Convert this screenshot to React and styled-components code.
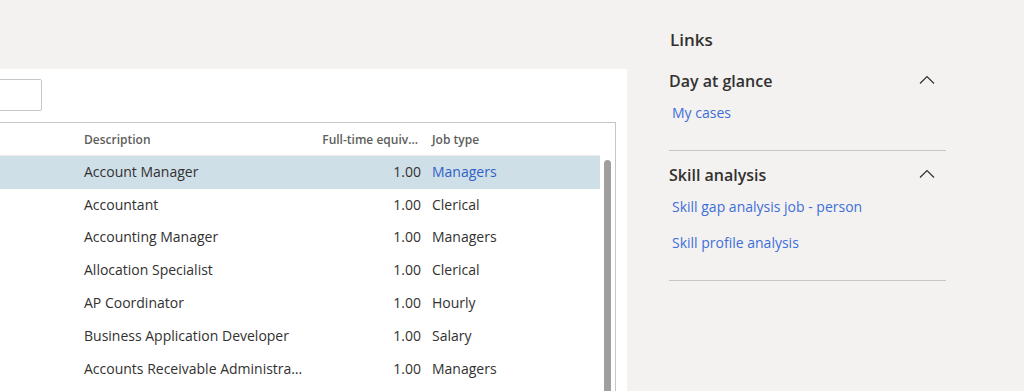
import React from "react";
import styled, { createGlobalStyle } from "styled-components";

const GlobalStyle = createGlobalStyle`
  html, body {
    margin: 0;
    padding: 0;
    background: #f3f2f1;
    font-family: "Open Sans", "Noto Sans", sans-serif;
    color: #323130;
  }
`;

const jobs = [
  { desc: "Account Manager", fte: "1.00", type: "Managers", selected: true },
  { desc: "Accountant", fte: "1.00", type: "Clerical" },
  { desc: "Accounting Manager", fte: "1.00", type: "Managers" },
  { desc: "Allocation Specialist", fte: "1.00", type: "Clerical" },
  { desc: "AP Coordinator", fte: "1.00", type: "Hourly" },
  { desc: "Business Application Developer", fte: "1.00", type: "Salary" },
  { desc: "Accounts Receivable Administrator", fte: "1.00", type: "Managers" },
];

const sections = [
  { title: "Day at glance", links: ["My cases"] },
  {
    title: "Skill analysis",
    links: ["Skill gap analysis job - person", "Skill profile analysis"],
  },
];

const Chevron = () => (
  <svg width="16" height="10" viewBox="0 0 16 10" fill="none">
    <path d="M1 8.5 L8 1.5 L15 8.5" stroke="#323130" strokeWidth="1.2" />
  </svg>
);

const App = () => {
  return (
    <Page>
      <GlobalStyle />
      <Workspace>
        <Panel>
          <Inner>
            <SearchBox />
            <Grid>
              <HeaderRow>
                <span />
                <HeadCell>Description</HeadCell>
                <HeadCell align="right">Full-time equiv...</HeadCell>
                <HeadCell>Job type</HeadCell>
              </HeaderRow>
              <Body>
                <Rows>
                  {jobs.map((j) => (
                    <Row key={j.desc} selected={j.selected}>
                      <span />
                      <Cell>{j.desc}</Cell>
                      <Cell align="right">{j.fte}</Cell>
                      <Cell link={j.selected}>{j.type}</Cell>
                    </Row>
                  ))}
                </Rows>
                <Track>
                  <Thumb />
                </Track>
              </Body>
            </Grid>
          </Inner>
        </Panel>
      </Workspace>
      <Pane>
        <PaneTitle>Links</PaneTitle>
        {sections.map((s) => (
          <Section key={s.title}>
            <SectionHeader>
              <span>{s.title}</span>
              <Chevron />
            </SectionHeader>
            <LinkList>
              {s.links.map((l) => (
                <LinkItem key={l} href="#">
                  {l}
                </LinkItem>
              ))}
            </LinkList>
          </Section>
        ))}
      </Pane>
    </Page>
  );
};

const Page = styled.div`
  display: flex;
  width: 1024px;
  height: 391px;
  overflow: hidden;
`;

const Workspace = styled.div`
  width: 627px;
  padding-top: 69px;
  display: flex;
  flex-direction: column;
`;

const Panel = styled.div`
  flex: 1;
  background: #ffffff;
  overflow: hidden;
`;

const Inner = styled.div`
  margin-left: -200px;
  padding-top: 10px;
`;

const SearchBox = styled.div`
  width: 240px;
  height: 30px;
  border: 1px solid #c8c6c4;
  border-radius: 2px;
`;

const Grid = styled.div`
  margin-top: 11px;
  width: 814px;
  border: 1px solid #c8c6c4;
  border-bottom: none;
`;

const columns = "276px 236px 112px 1fr";

const HeaderRow = styled.div`
  display: grid;
  grid-template-columns: ${columns};
  height: 32px;
  align-items: center;
  border-bottom: 1px solid #edebe9;
  margin-right: 15px;
`;

const HeadCell = styled.div`
  font-size: 12px;
  font-weight: 600;
  color: #605e5c;
  padding: ${(p) => (p.align === "right" ? "0 7px 0 0" : "0 8px 0 7px")};
  text-align: ${(p) => p.align || "left"};
  white-space: nowrap;
  overflow: hidden;
`;

const Body = styled.div`
  display: flex;
`;

const Rows = styled.div`
  flex: 1;
`;

const Row = styled.div`
  display: grid;
  grid-template-columns: ${columns};
  height: 32.8px;
  align-items: center;
  background: ${(p) => (p.selected ? "#cfdfe8" : "transparent")};
`;

const Cell = styled.div`
  font-size: 14px;
  line-height: 19px;
  padding-bottom: 2px;
  color: ${(p) => (p.link ? "#2f5fc7" : "#323130")};
  padding-left: ${(p) => (p.align === "right" ? "0" : "7px")};
  padding-right: ${(p) => (p.align === "right" ? "4px" : "8px")};
  text-align: ${(p) => p.align || "left"};
  white-space: nowrap;
  overflow: hidden;
  text-overflow: ellipsis;
`;

const Track = styled.div`
  width: 15px;
  padding: 4px 4px 0 4px;
  box-sizing: border-box;
`;

const Thumb = styled.div`
  width: 7px;
  height: 260px;
  background: #a19f9d;
  border-radius: 4px 4px 0 0;
`;

const Pane = styled.div`
  flex: 1;
  padding-left: 42px;
  padding-top: 29px;
`;

const PaneTitle = styled.div`
  font-size: 17px;
  font-weight: 600;
  line-height: 22px;
  margin: 0 0 6px 1px;
`;

const Section = styled.div`
  width: 277px;
  padding: 13px 0 27px;
  border-bottom: 1px solid #c8c6c4;
`;

const SectionHeader = styled.div`
  display: flex;
  justify-content: space-between;
  align-items: center;
  height: 22px;
  padding-right: 11px;
  font-size: 16px;
  font-weight: 600;

  svg {
    margin-top: -3px;
  }
`;

const LinkList = styled.div`
  display: flex;
  flex-direction: column;
  align-items: flex-start;
  gap: 16px;
  margin-top: 11px;
  padding-left: 3px;
`;

const LinkItem = styled.a`
  font-size: 14px;
  line-height: 20px;
  color: #3e6fd8;
  text-decoration: none;
`;

export default App;
